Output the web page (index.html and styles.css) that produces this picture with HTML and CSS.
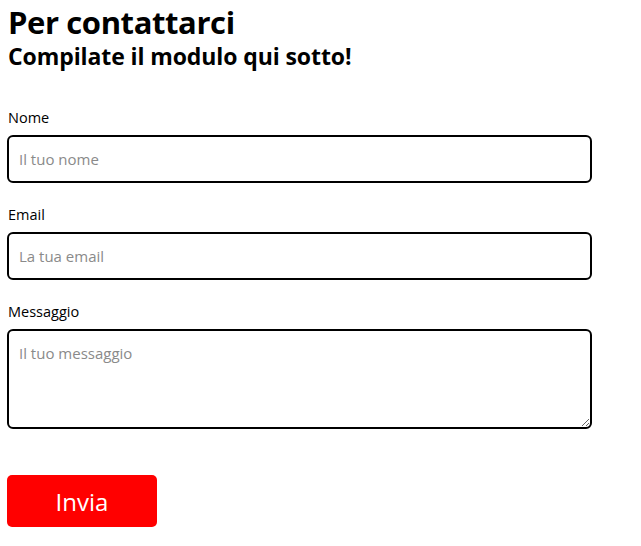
FILE: index.html
```html
<!DOCTYPE html>
<html lang="it">
<head>
<meta charset="utf-8">
<title>Per contattarci</title>
<link rel="stylesheet" href="styles.css">
</head>
<body>
<header class="intro">
  <h1 class="title">Per contattarci</h1>
  <h2 class="subtitle">Compilate il modulo qui sotto!</h2>
</header>
<form class="contact-form">
  <div class="field">
    <label class="label" for="nome">Nome</label>
    <input class="control" id="nome" type="text" placeholder="Il tuo nome">
  </div>
  <div class="field">
    <label class="label" for="email">Email</label>
    <input class="control" id="email" type="email" placeholder="La tua email">
  </div>
  <div class="field field-last">
    <label class="label" for="msg">Messaggio</label>
    <textarea class="control area" id="msg" placeholder="Il tuo messaggio"></textarea>
  </div>
  <button class="submit" type="button">Invia</button>
</form>
</body>
</html>
```
FILE: styles.css
```css
* { box-sizing: border-box; }
body {
  margin: 0;
  padding: 4px 0 0 7px;
  font-family: "Open Sans", "Noto Sans", sans-serif;
  color: #000;
  background: #fff;
}
.intro { padding-left: 1px; }
.title {
  margin: 0;
  font-size: 31px;
  line-height: 36px;
  font-weight: 700;
  letter-spacing: -0.4px;
}
.subtitle {
  margin: 0;
  font-size: 23px;
  line-height: 32px;
  font-weight: 700;
  letter-spacing: -0.1px;
}
.contact-form {
  display: flex;
  flex-direction: column;
  padding-top: 36px;
}
.field {
  display: flex;
  flex-direction: column;
  margin-bottom: 22px;
}
.label {
  font-size: 14.5px;
  line-height: 19px;
  margin: 0 0 8px 1px;
}
.control {
  width: 585px;
  height: 48px;
  border: 2px solid #000;
  border-radius: 6px;
  padding: 0 10px;
  font-family: inherit;
  font-size: 15px;
  color: #000;
  background: #fff;
  outline: none;
}
.control::placeholder { color: #8a8a8a; }
.area {
  height: 100px;
  padding: 12px 10px;
  resize: vertical;
}
.field-last { margin-bottom: 46px; }
.submit {
  width: 150px;
  height: 52px;
  border: none;
  border-radius: 5px;
  background: #ff0000;
  color: #fff;
  font-family: inherit;
  font-size: 24px;
  cursor: pointer;
}
```
